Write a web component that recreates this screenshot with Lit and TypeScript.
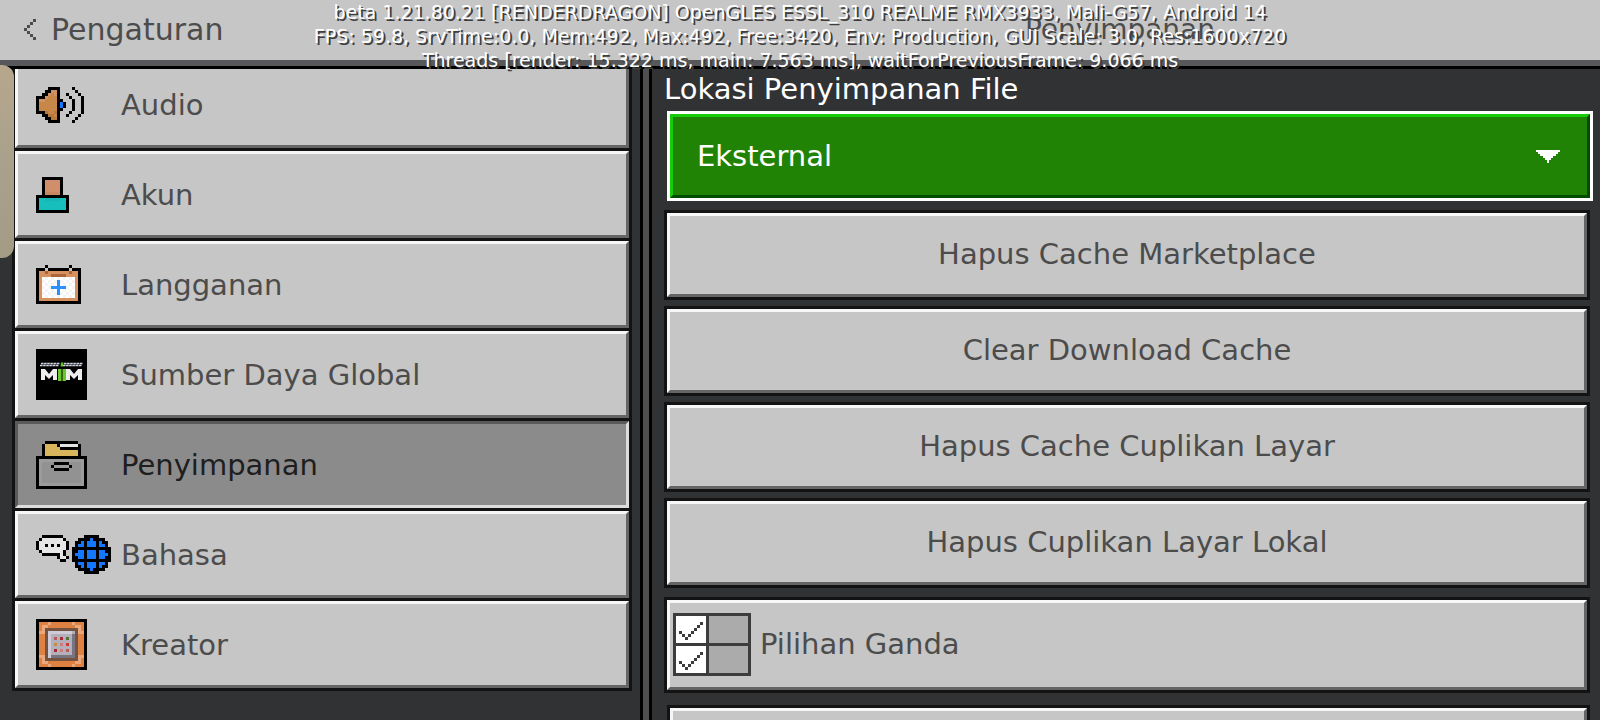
import { LitElement, html, svg, css } from "lit";
import { customElement, property, state } from "lit/decorators.js";

type Sprite = { palette: Record<string, string>; rows: string[] };

const SPRITES: Record<string, Sprite> = {
  audio: {
    palette: { K: "#000000", b: "#c68749", l: "#ce9263", d: "#b5793e", B: "#1478ff" },
    rows: [
      "....KKKK....K...",
      "...KKllK.....K..",
      "..KKlblK..K...K.",
      "KKKlbbbK...K...K",
      "KllbbbbKK...K..K",
      "KbbbbbbKBK..K..K",
      "KbbbbbbKBK..K..K",
      "KbbbbbbKK...K..K",
      "KKKdbbdK...K...K",
      "..KKddbK..K...K.",
      "...KKddK.....K..",
      "....KKKK....K...",
    ],
  },
  account: {
    palette: { K: "#000000", s: "#d18e6b", d: "#c9885f", t: "#16bfbb", u: "#18b5b2" },
    rows: [
      "..KKKKKKK..",
      "..KsssssK..",
      "..KsssssK..",
      "..KsssssK..",
      "..KsssssK..",
      "..KdddddK..",
      "KKKKKKKKKKK",
      "KttuuuuuttK",
      "KtttttttttK",
      "KtttttttttK",
      "KtttttttttK",
      "KKKKKKKKKKK",
    ],
  },
  subscription: {
    palette: { K: "#000000", o: "#d8905f", n: "#a8663a", w: "#ffffff", v: "#f4f4f4", B: "#2b8fff" },
    rows: [
      "...K.......K...",
      "KKK.KKKKKKK.KKK",
      "KoonooooooonooK",
      "KoooonnnnnooooK",
      "KowvwvwvwvwvwoK",
      "KovwvwvBvwvwvoK",
      "KowvwvwBwvwvwoK",
      "KovwvBBBBBvwvoK",
      "KowvwvwBwvwvwoK",
      "KovwvwvBvwvwvoK",
      "KowvwvwvwvwvwoK",
      "KoooooooooooooK",
      "KKKKKKKKKKKKKKK",
    ],
  },
  storage: {
    palette: { K: "#000000", g: "#d9b65c", w: "#e3e3e3", m: "#929292", e: "#9c9c9c" },
    rows: [
      "...KKKKKKKKKKK...",
      "..KggggKwwwwwwK..",
      "..KgggggKKKKKKK..",
      "..KgggggggggggK..",
      "..KgggggggggggK..",
      "KKKKKKKKKKKKKKKKK",
      "KeeeeeeeeeeeeeeeK",
      "KemmmmKKKKKmmmmeK",
      "KemmmKeeeeeKmmmeK",
      "KemmmmKKKKKmmmmeK",
      "KemmmmmmmmmmmmmeK",
      "KemmmmmmmmmmmmmeK",
      "KemmmmmmmmmmmmmeK",
      "KemmmmmmmmmmmmmeK",
      "KeeeeeeeeeeeeeeeK",
      "KKKKKKKKKKKKKKKKK",
    ],
  },
  language: {
    palette: { K: "#000000", w: "#e6e6e6", B: "#1478ff" },
    rows: [
      "..KKKKKKK.......KKKKK....",
      ".KwwwwwwwK....KKKKBKKKK..",
      "KwwwwwwwwwK..KKBKBBBKBKK.",
      "KwwKwKwKwwK..KBBKBBBKBBK.",
      "KwwwwwwwwwK.KKKKKKKKKKKKK",
      ".KwwwwwwwK..KKBBKBBBKBBKK",
      "..KKKKKKwK..KBBBKBBBKBBBK",
      ".......KwwK.KKBBKBBBKBBKK",
      "........KK..KKKKKKKKKKKKK",
      ".............KBBKBBBKBBK.",
      ".............KKBKBBBKBKK.",
      "..............KKKKBKKKK..",
      "................KKKKK....",
    ],
  },
  creator: {
    palette: {
      K: "#000000", o: "#df8142", p: "#eba77c", n: "#745440", h: "#cfccd8", c: "#b3b0bc",
      s: "#787581", r: "#a52a2f", q: "#b85a58", g: "#4c7434", y: "#c08f42", R: "#d13a38", i: "#d07a7c",
    },
    rows: [
      "KKKKKKKKKKKKKKKKK",
      "KooopooooooopoooK",
      "KoppoooooooooppoK",
      "KopnnnnnnnnnnnpoK",
      "KppnhhhhhhhhcnppK",
      "KoonhcccccccsnooK",
      "KoonhcqcrcgcsnooK",
      "KoonhcccccccsnooK",
      "KoonhcycicRcsnooK",
      "KoonhcccccccsnooK",
      "KoonhcrcicqcsnooK",
      "KoonhcccccccsnooK",
      "KppnhssssssssnppK",
      "KopnnnnnnnnnnnpoK",
      "KoppoooooooooppoK",
      "KooopooooooopoooK",
      "KKKKKKKKKKKKKKKKK",
    ],
  },
  back: {
    palette: { K: "#4c4c4c" },
    rows: ["...K", "..K.", ".K..", "K...", ".K..", "..K.", "...K"],
  },
  check: {
    palette: { K: "#3c3c3c" },
    rows: [".......K", "......K.", ".....K..", "K...K...", ".K.K....", "..K....."],
  },
};

/* A sprite drawn from a character grid, three screen pixels to a cell. */
@customElement("pixel-icon")
export class PixelIcon extends LitElement {
  static styles = css`
    :host { display: block; }
    svg { display: block; }
  `;
  @property() name = "";

  render() {
    const sprite = SPRITES[this.name];
    if (!sprite) return html``;
    const cols = Math.max(...sprite.rows.map((r) => r.length));
    const cells = sprite.rows.flatMap((row, y) => {
      const out: unknown[] = [];
      for (let x = 0; x < row.length; ) {
        let end = x + 1;
        while (end < row.length && row[end] === row[x]) end++;
        if (row[x] !== ".") {
          out.push(svg`<rect x=${x} y=${y} width=${end - x} height="1" fill=${sprite.palette[row[x]]}></rect>`);
        }
        x = end;
      }
      return out;
    });
    return html`<svg width=${cols * 3} height=${sprite.rows.length * 3}
      viewBox="0 0 ${cols} ${sprite.rows.length}" shape-rendering="crispEdges" aria-hidden="true">${cells}</svg>`;
  }
}

@customElement("pack-logo")
export class PackLogo extends LitElement {
  static styles = css`
    :host { display: block; }
    svg { display: block; }
  `;
  render() {
    return html`<svg width="51" height="51" viewBox="0 0 51 51" aria-hidden="true">
      <rect width="51" height="51" fill="#000"></rect>
      <path d="M5 14.500h19M28 14.500h19M4 16.500h19M27 16.500h19" stroke="#cfd6e2" stroke-width="1.6" stroke-dasharray="2.600 .5"></path>
      <path d="M25 13.500h2.500l-.5 4h-2.500z" fill="#62c42a"></path>
      <path d="M5 31V20h4l4 5 4-5h4v11h-4v-5l-4 4-4-4v5zM30 31V20h4l4 5 4-5h4v11h-4v-5l-4 4-4-4v5z" fill="#ededed"></path>
      <path d="M22 20h3.500v12H22zM26.500 20H30v12h-3.500z" fill="#6cc72c"></path>
    </svg>`;
  }
}

const SECTIONS = [
  { id: "audio", label: "Audio" },
  { id: "account", label: "Akun" },
  { id: "subscription", label: "Langganan" },
  { id: "resources", label: "Sumber Daya Global" },
  { id: "storage", label: "Penyimpanan" },
  { id: "language", label: "Bahasa" },
  { id: "creator", label: "Kreator" },
];

const ACTIONS = [
  "Hapus Cache Marketplace",
  "Clear Download Cache",
  "Hapus Cache Cuplikan Layar",
  "Hapus Cuplikan Layar Lokal",
];

const DEBUG = [
  "beta 1.21.80.21 [RENDERDRAGON] OpenGLES ESSL_310 REALME RMX3933, Mali-G57, Android 14",
  "FPS: 59.8, SrvTime:0.0, Mem:492, Max:492, Free:3420, Env: Production, GUI Scale: 3.0, Res:1600x720",
  "Threads [render: 15.322 ms, main: 7.563 ms], waitForPreviousFrame: 9.066 ms",
];

@customElement("app-root")
export class AppRoot extends LitElement {
  static styles = css`
    :host {
      display: flex;
      flex-direction: column;
      position: relative;
      height: 100vh;
      overflow: hidden;
      background: #313233;
      color: #4c4c4c;
      font: 29px/30px "DejaVu Sans", sans-serif;
    }
    * { box-sizing: border-box; }
    button, select {
      margin: 0;
      font: inherit;
      color: inherit;
      border-radius: 0;
      cursor: pointer;
    }
    h1 { margin: 0; font: inherit; }
    .bar {
      flex: none;
      display: flex;
      align-items: center;
      height: 69px;
      padding-bottom: 7px;
      background: #c6c6c6;
      border-bottom: 3px solid #000;
      box-shadow: inset 0 -6px #58585a;
      position: relative;
      z-index: 1;
    }
    .back {
      display: flex;
      align-items: center;
      gap: 15px;
      width: 40%;
      padding: 0 0 0 24px;
      border: 0;
      background: none;
      text-align: left;
      font-size: 30px;
    }
    .title { flex: 1; text-align: center; font-size: 28px; }
    .columns { flex: 1; min-height: 0; display: flex; }
    .side { width: 40%; padding: 0 8px 0 12px; }
    .list {
      display: flex;
      flex-direction: column;
      gap: 3px;
      margin-top: -11px;
      padding: 3px;
      background: #131313;
    }
    .item, .action {
      background: #c6c6c6;
      border: 3px solid;
      border-color: #f7f7f7 #656565 #656565 #f7f7f7;
    }
    .item {
      display: flex;
      align-items: center;
      height: 87px;
      padding: 0 18px;
      text-align: left;
    }
    .item.selected {
      background: #8b8b8b;
      border-color: #5a5a5a #dcdcdc #dcdcdc #5a5a5a;
      color: #1e1e1e;
    }
    .icon { flex: none; width: 85px; }
    .divider {
      flex: none;
      width: 12px;
      background: #4f4f50;
      border: solid #000;
      border-width: 0 3px;
    }
    .panel {
      flex: 1;
      min-width: 0;
      display: flex;
      flex-direction: column;
      gap: 6px;
      padding: 5px 10px 0 12px;
      overflow: hidden;
    }
    .panel > * { flex: none; }
    .location { margin: 0 -3px 3px 0; }
    .location label { display: block; height: 37px; color: #fff; }
    .dropdown {
      display: grid;
      align-items: center;
      height: 90px;
      margin-left: 3px;
      border: 3px solid #fff;
    }
    .dropdown select, .dropdown svg { grid-area: 1 / 1; }
    .dropdown select {
      appearance: none;
      width: 100%;
      height: 84px;
      padding: 0 24px;
      color: #fff;
      background: #218306;
      border: 3px solid;
      border-color: #17cd07 #004d00 #004d00 #17cd07;
      outline: none;
    }
    .dropdown svg { justify-self: end; margin-right: 30px; pointer-events: none; }
    .frame { display: grid; padding: 3px; background: #131313; }
    .action { height: 84px; padding: 0 0 2px; text-align: center; }
    .frame.multi { margin-top: 3px; }
    .multi .action {
      display: flex;
      align-items: center;
      gap: 9px;
      height: 90px;
      padding: 0 3px 2px;
    }
    .frame.next { margin: 6px 0 0 3px; }
    .grid {
      display: grid;
      grid-template: 27px 27px / 30px 39px;
      gap: 3px;
      padding: 3px;
      background: #3c3c3c;
    }
    .on, .off { display: grid; place-content: center; }
    .on { background: #fff; padding-top: 3px; }
    .off { background: #ababab; }
    .grip {
      position: absolute;
      left: 0;
      top: 65px;
      width: 14px;
      height: 193px;
      z-index: 2;
      border-radius: 0 12px 12px 0;
      background: linear-gradient(#b7a78c, #a9a18c 50%, #a39b84);
    }
    .debug {
      position: absolute;
      inset: 0 0 auto 0;
      z-index: 3;
      margin: 0;
      text-align: center;
      white-space: nowrap;
      color: #fff;
      font-size: 19px;
      line-height: 24px;
      text-shadow: 2px 2px #3e3e3e;
      pointer-events: none;
    }
  `;

  @state() private current = "storage";

  render() {
    return html`
      <header class="bar">
        <button class="back"><pixel-icon name="back"></pixel-icon>Pengaturan</button>
        <h1 class="title">Penyimpanan</h1>
      </header>
      <div class="columns">
        <nav class="side">
          <div class="list">
            ${SECTIONS.map(
              (s) => html`<button
                class="item ${s.id === this.current ? "selected" : ""}"
                aria-pressed=${s.id === this.current}
                @click=${() => (this.current = s.id)}
              >
                <span class="icon">
                  ${s.id === "resources" ? html`<pack-logo></pack-logo>` : html`<pixel-icon name=${s.id}></pixel-icon>`}
                </span>
                ${s.label}
              </button>`
            )}
          </div>
        </nav>
        <div class="divider"></div>
        <main class="panel">
          <div class="location">
            <label for="location">Lokasi Penyimpanan File</label>
            <div class="dropdown">
              <select id="location"><option>Eksternal</option></select>
              <svg width="24" height="13" shape-rendering="crispEdges" fill="#fff" aria-hidden="true">
                <path d="M0 0h24v2h-2v2h-2v2h-3v2h-2v2h-2v3h-2v-3h-2v-2h-2v-2h-3v-2h-2v-2h-2z"></path>
              </svg>
            </div>
          </div>
          ${ACTIONS.map((a) => html`<div class="frame"><button class="action">${a}</button></div>`)}
          <div class="frame multi">
            <button class="action">
              <span class="grid">
                <span class="on"><pixel-icon name="check"></pixel-icon></span><span class="off"></span>
                <span class="on"><pixel-icon name="check"></pixel-icon></span><span class="off"></span>
              </span>
              Pilihan Ganda
            </button>
          </div>
          <div class="frame next"><button class="action"></button></div>
        </main>
      </div>
      <div class="grip"></div>
      <p class="debug">${DEBUG.map((line) => html`<span>${line}</span><br />`)}</p>
    `;
  }
}
